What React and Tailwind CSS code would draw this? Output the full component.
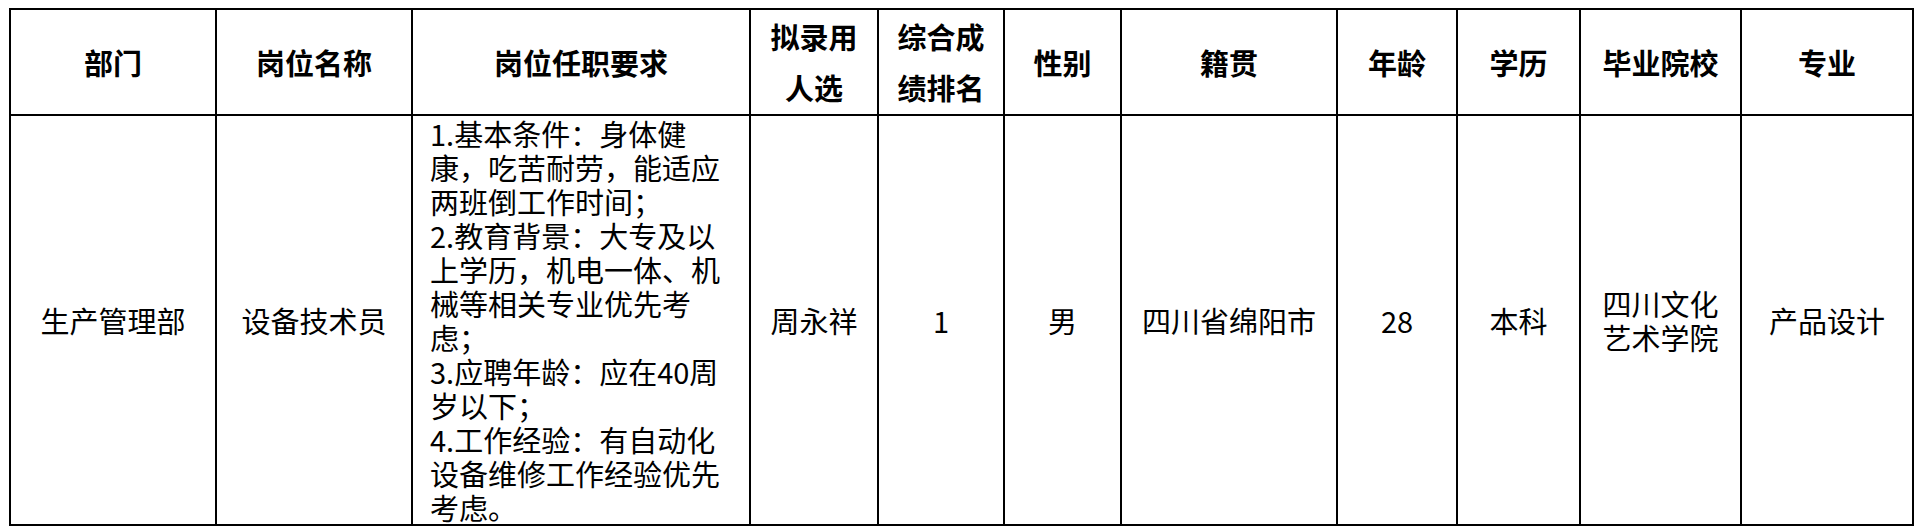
const FONT = "font-['Noto_Sans_CJK_SC','Microsoft_YaHei',sans-serif]"

const headers = [
  ['部门'],
  ['岗位名称'],
  ['岗位任职要求'],
  ['拟录用', '人选'],
  ['综合成', '绩排名'],
  ['性别'],
  ['籍贯'],
  ['年龄'],
  ['学历'],
  ['毕业院校'],
  ['专业'],
]

// line breaks follow the original sheet exactly
const requirements = [
  '1.基本条件：身体健',
  '康，吃苦耐劳，能适应',
  '两班倒工作时间；',
  '2.教育背景：大专及以',
  '上学历，机电一体、机',
  '械等相关专业优先考',
  '虑；',
  '3.应聘年龄：应在40周',
  '岁以下；',
  '4.工作经验：有自动化',
  '设备维修工作经验优先',
  '考虑。',
]

const row = [
  ['生产管理部'],
  ['设备技术员'],
  null,
  ['周永祥'],
  ['1'],
  ['男'],
  ['四川省绵阳市'],
  ['28'],
  ['本科'],
  ['四川文化', '艺术学院'],
  ['产品设计'],
]

function Lines({ lines }) {
  return lines.map((l, i) => <div key={i}>{l}</div>)
}

export default function App() {
  return (
    <div className={`w-[1921px] h-[529px] bg-white text-black ${FONT}`}>
      <div className="ml-[9px] pt-[8px]">
        <div className="grid w-fit grid-cols-[204px_194px_336px_126px_124px_115px_214px_118px_121px_159px_170px] grid-rows-[104px_408px] gap-[2px] bg-black p-[2px]">
          {headers.map((h, i) => (
            <div key={i} className="flex flex-col items-center justify-center bg-white text-center text-[29px] font-bold leading-[51px]">
              <Lines lines={h} />
            </div>
          ))}
          {row.map((c, i) =>
            c ? (
              <div key={i} className="flex flex-col items-center justify-center bg-white text-center text-[29px] leading-[34px]">
                <Lines lines={c} />
              </div>
            ) : (
              <div key={i} className="flex flex-col justify-center bg-white pl-[17px] text-left text-[29px] leading-[34px] whitespace-nowrap">
                <Lines lines={requirements} />
              </div>
            )
          )}
        </div>
      </div>
    </div>
  )
}
